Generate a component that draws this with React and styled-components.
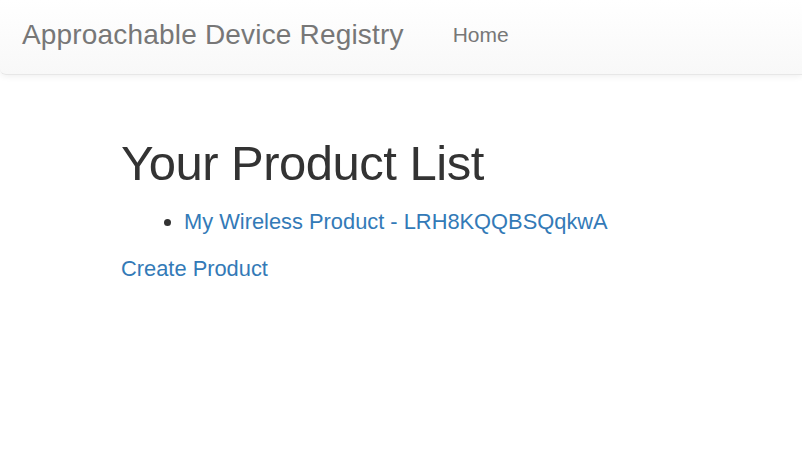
import React from 'react';
import styled, {createGlobalStyle} from 'styled-components'

const GlobalStyle = createGlobalStyle`
  body {
    margin: 0;
    font-family: "Liberation Sans", Arial, sans-serif;
    font-size: 21.85px;
    line-height: 1.43;
    color: #333;
    background: #fff;
  }
`;

const Navbar = styled.nav`
  display: flex;
  align-items: flex-start;
  box-sizing: border-box;
  height: 75px;
  padding-top: 20px;
  background-image: linear-gradient(to bottom, #fff 0, #f8f8f8 100%);
  border-bottom: 1px solid #e7e7e7;
  border-radius: 0 0 0 6px;
  box-shadow: inset 0 1px 0 rgba(255,255,255,.15), 0 1px 7px rgba(0,0,0,.075);
`;

const Brand = styled.a`
  padding: 0 22px;
  font-size: 28px;
  letter-spacing: 0.18px;
  line-height: 30px;
  color: #777;
  text-decoration: none;
`;

const NavLink = styled.a`
  padding: 0 22px 0 27px;
  font-size: 21px;
  line-height: 30px;
  color: #777;
  text-decoration: none;
`;

const Container = styled.main`
  padding: 62px 121px 0;
`;

const Title = styled.h1`
  margin: 0 0 15px;
  font-size: 49px;
  letter-spacing: -0.5px;
  font-weight: 500;
  line-height: 1.1;
`;

const ProductList = styled.ul`
  margin: 0 0 16px;
  padding-left: 63px;
`;

const Link = styled.a`
  color: #337ab7;
  text-decoration: none;
`;

const App = () => {
    const products = [{name: 'My Wireless Product', id: 'LRH8KQQBSQqkwA'}];
    return (
        <>
            <GlobalStyle/>
            <Navbar>
                <Brand href="#">Approachable Device Registry</Brand>
                <NavLink href="#">Home</NavLink>
            </Navbar>
            <Container>
                <Title>Your Product List</Title>
                <ProductList>
                    {products.map(p =>
                        <li key={p.id}><Link href="#">{p.name} - {p.id}</Link></li>
                    )}
                </ProductList>
                <Link href="#">Create Product</Link>
            </Container>
        </>
    );
}

export default App;
